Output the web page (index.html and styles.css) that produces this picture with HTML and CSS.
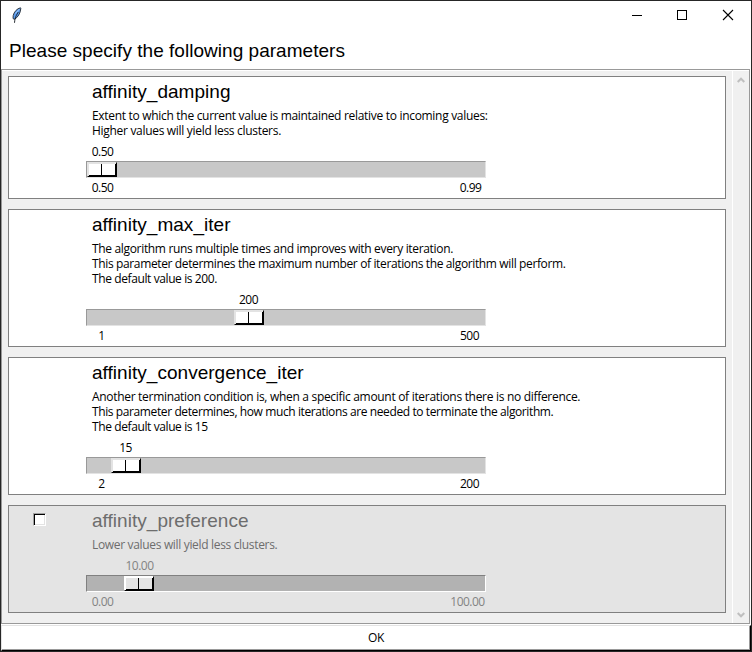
FILE: index.html
```html
<!DOCTYPE html>
<html lang="en">
<head>
<meta charset="utf-8">
<title>Parameters</title>
<link rel="stylesheet" href="styles.css">
</head>
<body>
<div class="window">
  <header class="titlebar">
    <svg class="feather" width="12" height="17" viewBox="0 0 12 17">
      <path d="M9.500 .8C6 1.500 3 5 2.200 8.500L2 11.500L3.300 12.300C7 10.500 9.500 6 9.800 1.500Z" fill="#5a9cf0" stroke="#24282d" stroke-width=".9"/>
      <path d="M7.300 5C5.500 8 4 10 3.500 15.800" fill="none" stroke="#10151c" stroke-width=".9"/>
      <path d="M8.300 2.200L4.400 6.500" stroke="#a8cdf5" stroke-width="1"/>
    </svg>
    <div class="controls">
      <svg width="46" height="29" viewBox="0 0 46 29" shape-rendering="crispEdges"><path d="M18 14.500H28" stroke="#000"/></svg>
      <svg width="45" height="29" viewBox="0 0 45 29" shape-rendering="crispEdges"><path d="M17.500 9.500H26.500V18.500H17.500Z" fill="none" stroke="#000"/></svg>
      <svg width="46" height="29" viewBox="0 0 46 29"><path d="M18 9L28 19M28 9L18 19" fill="none" stroke="#000" stroke-width="1.100"/></svg>
    </div>
  </header>
  <h1 class="heading">Please specify the following parameters</h1>
  <main class="panel">
    <div class="cards">
      <section class="card">
        <h2>affinity_damping</h2>
        <p><span class="loose">Extent to which the current value is maintained relative to incoming values:</span><span class="loose">Higher values will yield less clusters.</span></p>
        <div class="value"><span style="margin-left:0px">0.50</span></div>
        <div class="trough"><div class="thumb" style="margin-left:0px"></div></div>
        <div class="range"><span>0.50</span><span>0.99</span></div>
      </section>
      <section class="card">
        <h2>affinity_max_iter</h2>
        <p><span>The algorithm runs multiple times and improves with every iteration.</span><span class="snug">This parameter determines the maximum number of iterations the algorithm will perform.</span><span class="tight">The default value is 200.</span></p>
        <div class="value"><span style="margin-left:146px">200</span></div>
        <div class="trough"><div class="thumb" style="margin-left:147px"></div></div>
        <div class="range"><span class="whole">1</span><span class="whole">500</span></div>
      </section>
      <section class="card">
        <h2>affinity_convergence_iter</h2>
        <p><span class="loose">Another termination condition is, when a specific amount of iterations there is no difference.</span><span class="tight">This parameter determines, how much iterations are needed to terminate the algorithm.</span><span class="tight">The default value is 15</span></p>
        <div class="value"><span style="margin-left:23px">15</span></div>
        <div class="trough"><div class="thumb" style="margin-left:24px"></div></div>
        <div class="range"><span class="whole">2</span><span class="whole">200</span></div>
      </section>
      <section class="card disabled">
        <div class="check"></div>
        <h2>affinity_preference</h2>
        <p><span>Lower values will yield less clusters.</span></p>
        <div class="value"><span style="margin-left:37px">10.00</span></div>
        <div class="trough"><div class="thumb" style="margin-left:37px"></div></div>
        <div class="range"><span>0.00</span><span class="wide">100.00</span></div>
      </section>
    </div>
    <div class="scrollbar">
      <svg width="8" height="7" viewBox="0 0 8 7"><path d="M.7 5L4 1.700L7.300 5" fill="none" stroke="#bfbfbf" stroke-width="2"/></svg>
      <svg width="8" height="7" viewBox="0 0 8 7"><path d="M.7 2L4 5.300L7.300 2" fill="none" stroke="#bfbfbf" stroke-width="2"/></svg>
    </div>
  </main>
  <button class="ok">OK</button>
</div>
</body>
</html>
```
FILE: styles.css
```css
* { box-sizing: border-box; }
body { margin: 0; color: #000; font: 12px/15px "Open Sans", "Noto Sans", sans-serif; }
.window { width: 752px; height: 652px; border: 1px solid #262626; background: #fff; display: flex; flex-direction: column; }
.titlebar { height: 29px; display: flex; justify-content: space-between; flex: none; }
.feather { margin: 6px 0 0 10px; }
.controls { display: flex; }
.heading { margin: 0; height: 39px; padding: 10px 0 0 8px; font: 19px/22px "Liberation Sans", Arial, sans-serif; letter-spacing: 0.03px; white-space: nowrap; }
.panel { height: 555px; flex: none; margin-right: 1px; border: 1px solid #999; display: flex; background: #f0f0f0; box-shadow: inset 0 1px #fff; }
.cards { width: 730px; padding: 6px 0 0 6px; display: flex; flex-direction: column; gap: 10px; }
.card { width: 718px; border: 1px solid #808080; background: #fff; padding: 4px 0 3px 77px; position: relative; }
.card h2 { margin: 0 0 5px 6px; font: 19px/22px "Liberation Sans", Arial, sans-serif; letter-spacing: 0.03px; }
.card p { margin: 0 0 6px 6px; white-space: nowrap; letter-spacing: -0.33px; }
.card p span { display: block; height: 15px; }
.card p .loose { letter-spacing: -0.305px; }
.card p .snug { letter-spacing: -0.365px; }
.card p .tight { letter-spacing: -0.395px; }
.value { height: 15px; margin-bottom: 2px; letter-spacing: -0.5px; }
.value span { display: block; width: 33px; text-align: center; white-space: nowrap; }
.trough { width: 400px; height: 17px; background: #c8c8c8; border: 1px solid; border-color: #999 #e3e3e3 #e3e3e3 #999; }
.thumb { width: 30px; height: 15px; border: 1px solid; border-color: #e3e3e3 #000 #000 #e3e3e3; box-shadow: inset 1px 1px #e3e3e3, inset -1px -1px #000; background: linear-gradient(90deg, transparent 13px, #000 13px, #000 14px, transparent 14px), #fff; }
.range { width: 400px; height: 15px; margin-top: 2px; display: flex; justify-content: space-between; letter-spacing: -0.5px; }
.range span { width: 33px; text-align: center; }
.range span:last-child { margin-right: -1px; }
.range .whole { padding-right: 2px; }
.range .wide { width: 39px; }
.disabled { background: #e4e4e4; color: #6d6d6d; }
.disabled .value, .disabled .range { color: #838383; }
.disabled .trough { background: #b2b2b2; border-color: #808080 #fff #fff #808080; }
.disabled .thumb { background-color: #e4e4e4; border-color: #fff #000 #000 #fff; box-shadow: inset 1px 1px #fff, inset -1px -1px #000; }
.check { position: absolute; left: 24px; top: 7px; width: 13px; height: 13px; background: #fff; border: 1px solid; border-color: #a0a0a0 #fff #fff #a0a0a0; box-shadow: inset 1px 1px #000, inset -1px -1px #e3e3e3; }
.scrollbar { width: 17px; border-left: 1px solid #fff; display: flex; flex-direction: column; align-items: center; justify-content: space-between; padding: 7px 0 5px; }
.ok { margin: 1px 0 0; width: 750px; height: 26px; padding: 0 0 1px; border: 1px solid; border-color: #e3e3e3 #000 #000 #e3e3e3; box-shadow: inset -1px -1px #999; background: #fff; color: #000; font: inherit; letter-spacing: -0.3px; }
```
